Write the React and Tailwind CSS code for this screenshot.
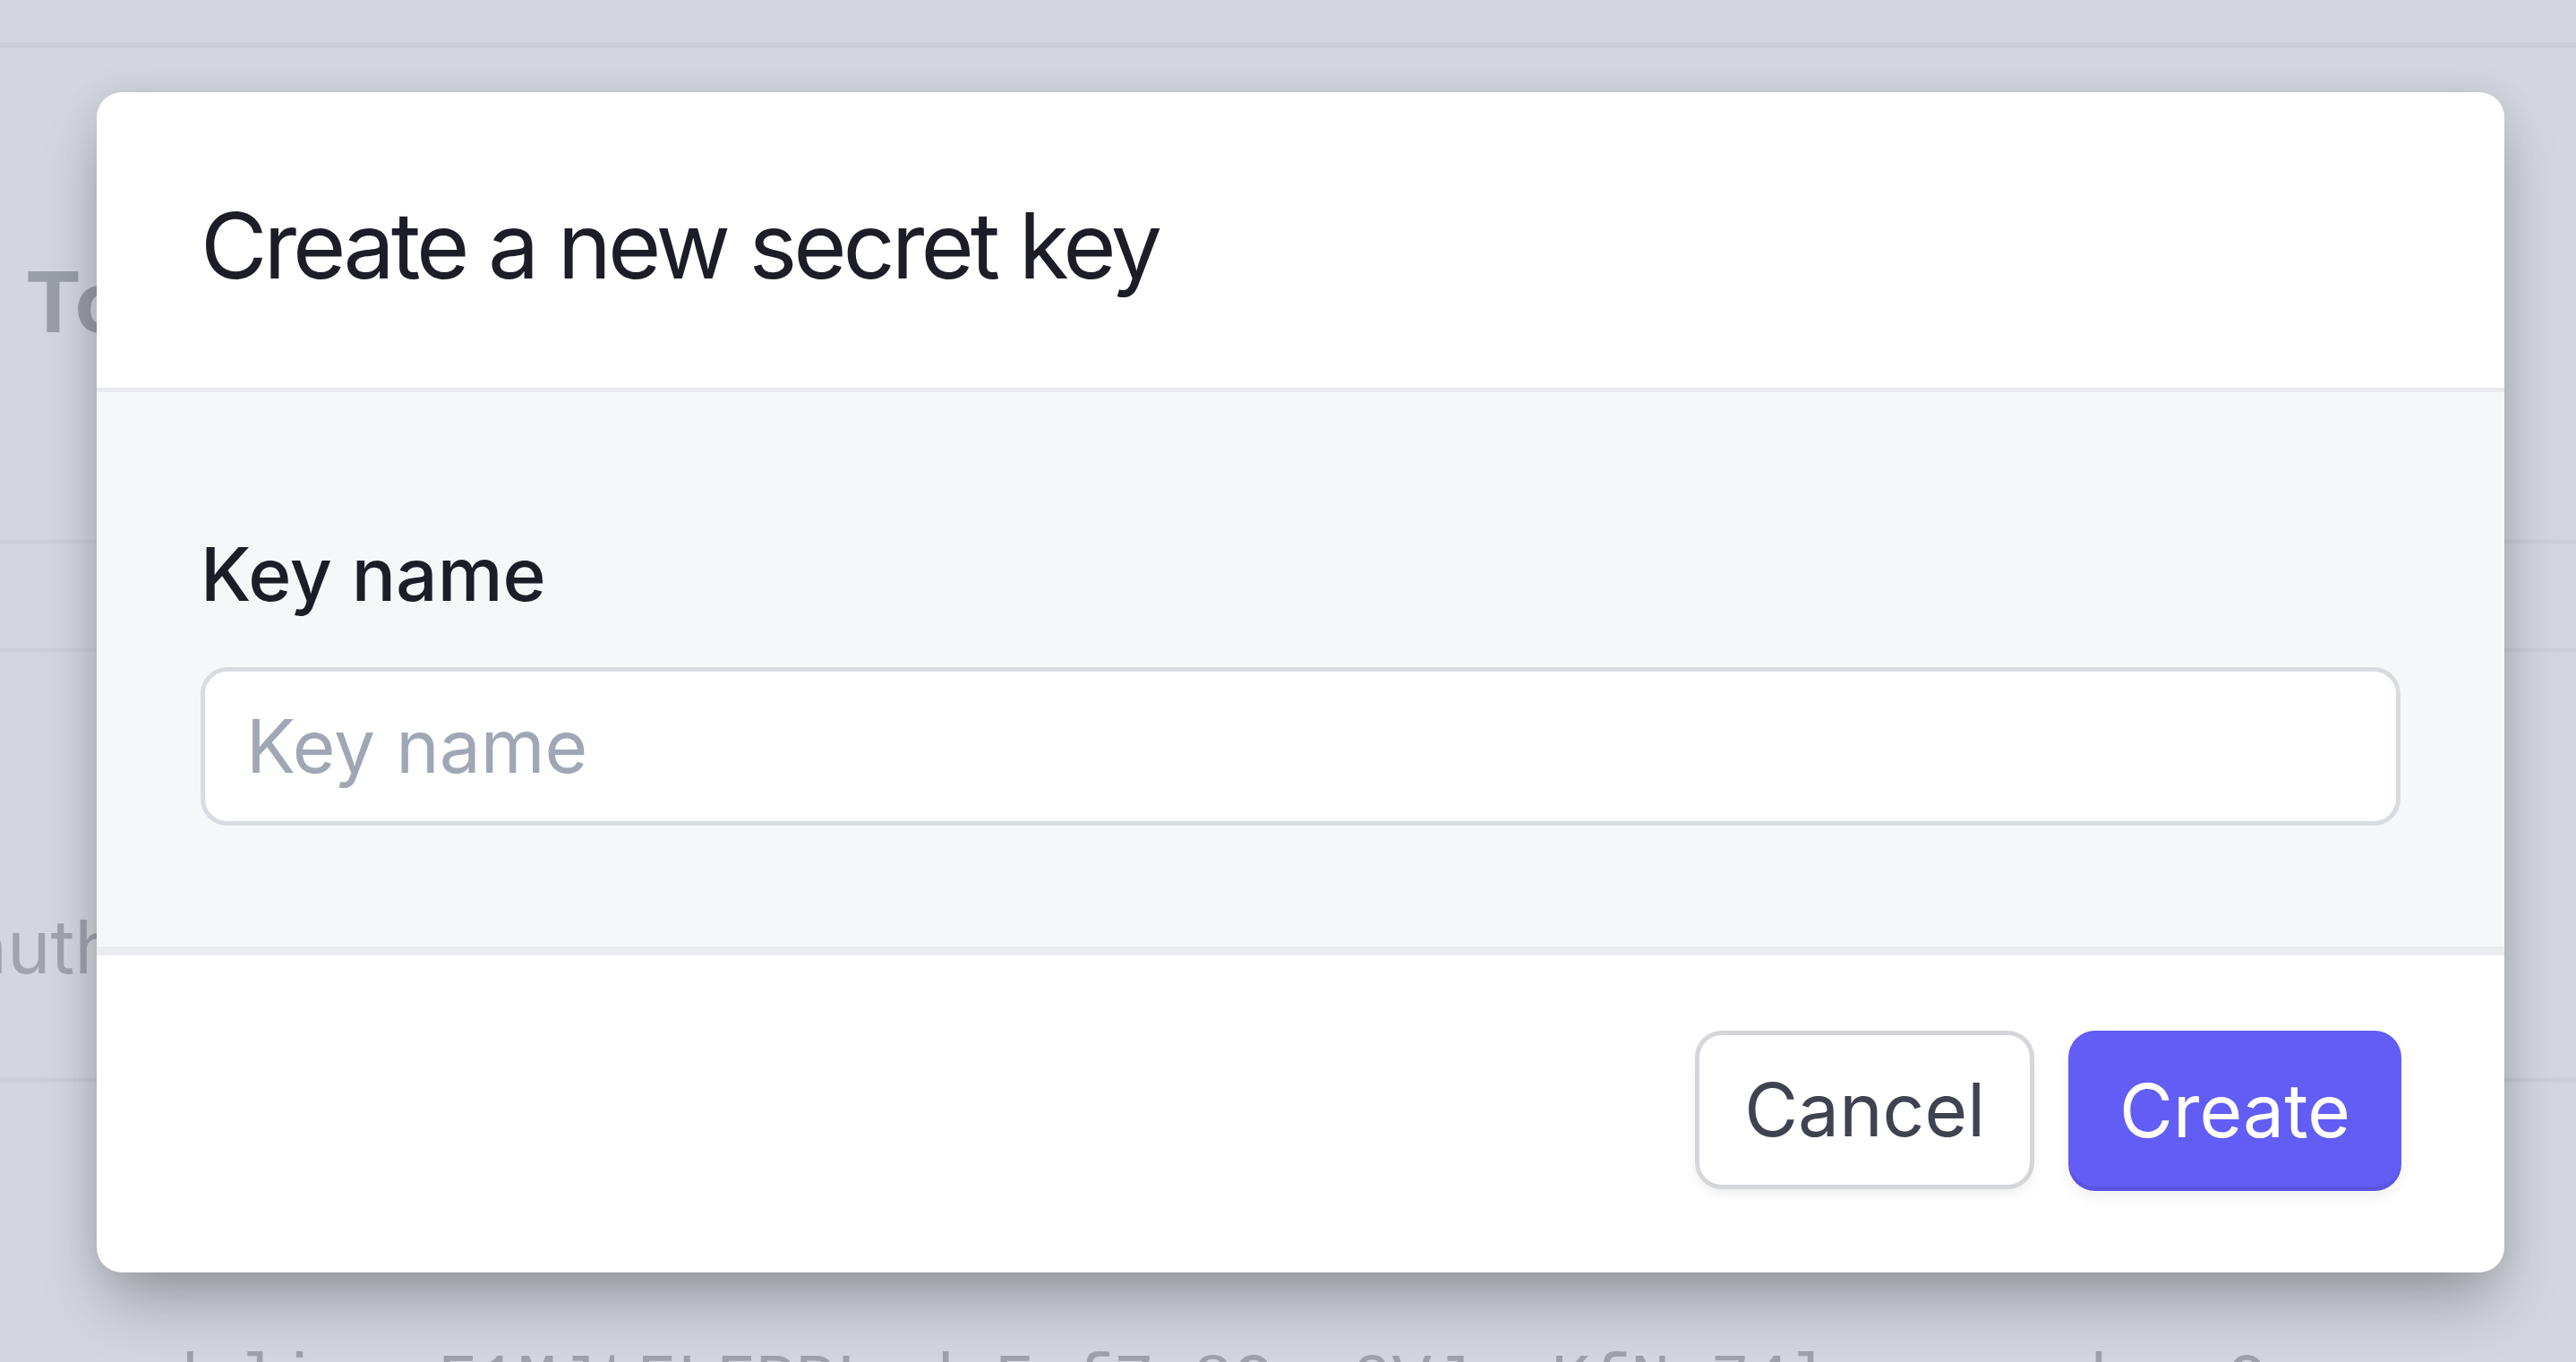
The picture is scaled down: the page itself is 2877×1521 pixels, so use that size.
import React from 'react';

export default function App() {
  return (
    <div className="relative h-screen w-full overflow-hidden bg-[#d3d6de] font-['Inter',sans-serif]">
      {/* Page behind the backdrop */}
      <div className="flex h-full flex-col">
        <div className="h-[53px] shrink-0 border-b-[5px] border-[#cbced6]" />
        <div className="h-[554px] shrink-0 border-b-4 border-[#cbced6] pl-[28px] pt-[237px]">
          <h2 className="text-[94px] font-bold leading-none text-[#9a9ea8]">Tokens</h2>
        </div>
        <div className="h-[121px] shrink-0 border-b-4 border-[#cbced6]" />
        <div className="h-[480px] shrink-0 border-b-4 border-[#cbced6] pt-[289px]">
          <p className="-ml-[38px] text-[82px] leading-none text-[#a0a4ae]">auth</p>
        </div>
        <div className="pl-[178px] pt-[298px]">
          <p className="whitespace-nowrap font-['Liberation_Mono',monospace] text-[74px] leading-none text-[#9ea2ad]">
            dali_e_F1MJtFLFPPLrduFofZs8Cwa0VJrmKfNu74lmnoswadvxrO
          </p>
        </div>
      </div>

      {/* Dialog */}
      <div className="absolute inset-0 pl-[108px] pt-[103px]">
        <div className="w-[2689px] overflow-hidden rounded-[28px] bg-white shadow-[0_40px_70px_-10px_rgba(0,0,0,0.28),0_0_40px_rgba(0,0,0,0.08)]">
          {/* Header */}
          <div className="border-b-[5px] border-[#e9eaee] px-[116px] pb-[88px] pt-[100px]">
            <h1 className="text-[102px] font-normal leading-[142px] tracking-[-0.04em] text-[#1c1d26]">
              Create a new secret key
            </h1>
          </div>

          {/* Body */}
          <div className="border-b-[10px] border-[#ebecf0] bg-[#f6f7f9] px-[116px] pb-[135px] pt-[145px]">
            <label className="block text-[82px] font-medium leading-[117px] text-[#1c1d26]">Key name</label>
            <input
              type="text"
              placeholder="Key name"
              className="mt-[45px] h-[177px] w-full rounded-[30px] border-[5px] border-[#d8dbe0] bg-white pl-[46px] text-[82px] text-[#1c1d26] outline-none placeholder:text-[#a0a7b4]"
            />
          </div>

          {/* Footer */}
          <div className="flex justify-end gap-[38px] px-[115px] pb-[91px] pt-[84px]">
            <button className="h-[177px] rounded-[30px] border-[5px] border-[#d4d6da] bg-white px-[50px] text-[82px] font-normal text-[#3f4350] shadow-[0_6px_12px_rgba(0,0,0,0.06)]">
              Cancel
            </button>
            <button className="h-[179px] rounded-[30px] bg-[#625df5] px-[57px] text-[82px] font-normal text-white shadow-[inset_0_-5px_0_rgba(0,0,0,0.08),0_8px_16px_rgba(0,0,0,0.06)]">
              Create
            </button>
          </div>
        </div>
      </div>
    </div>
  );
}
